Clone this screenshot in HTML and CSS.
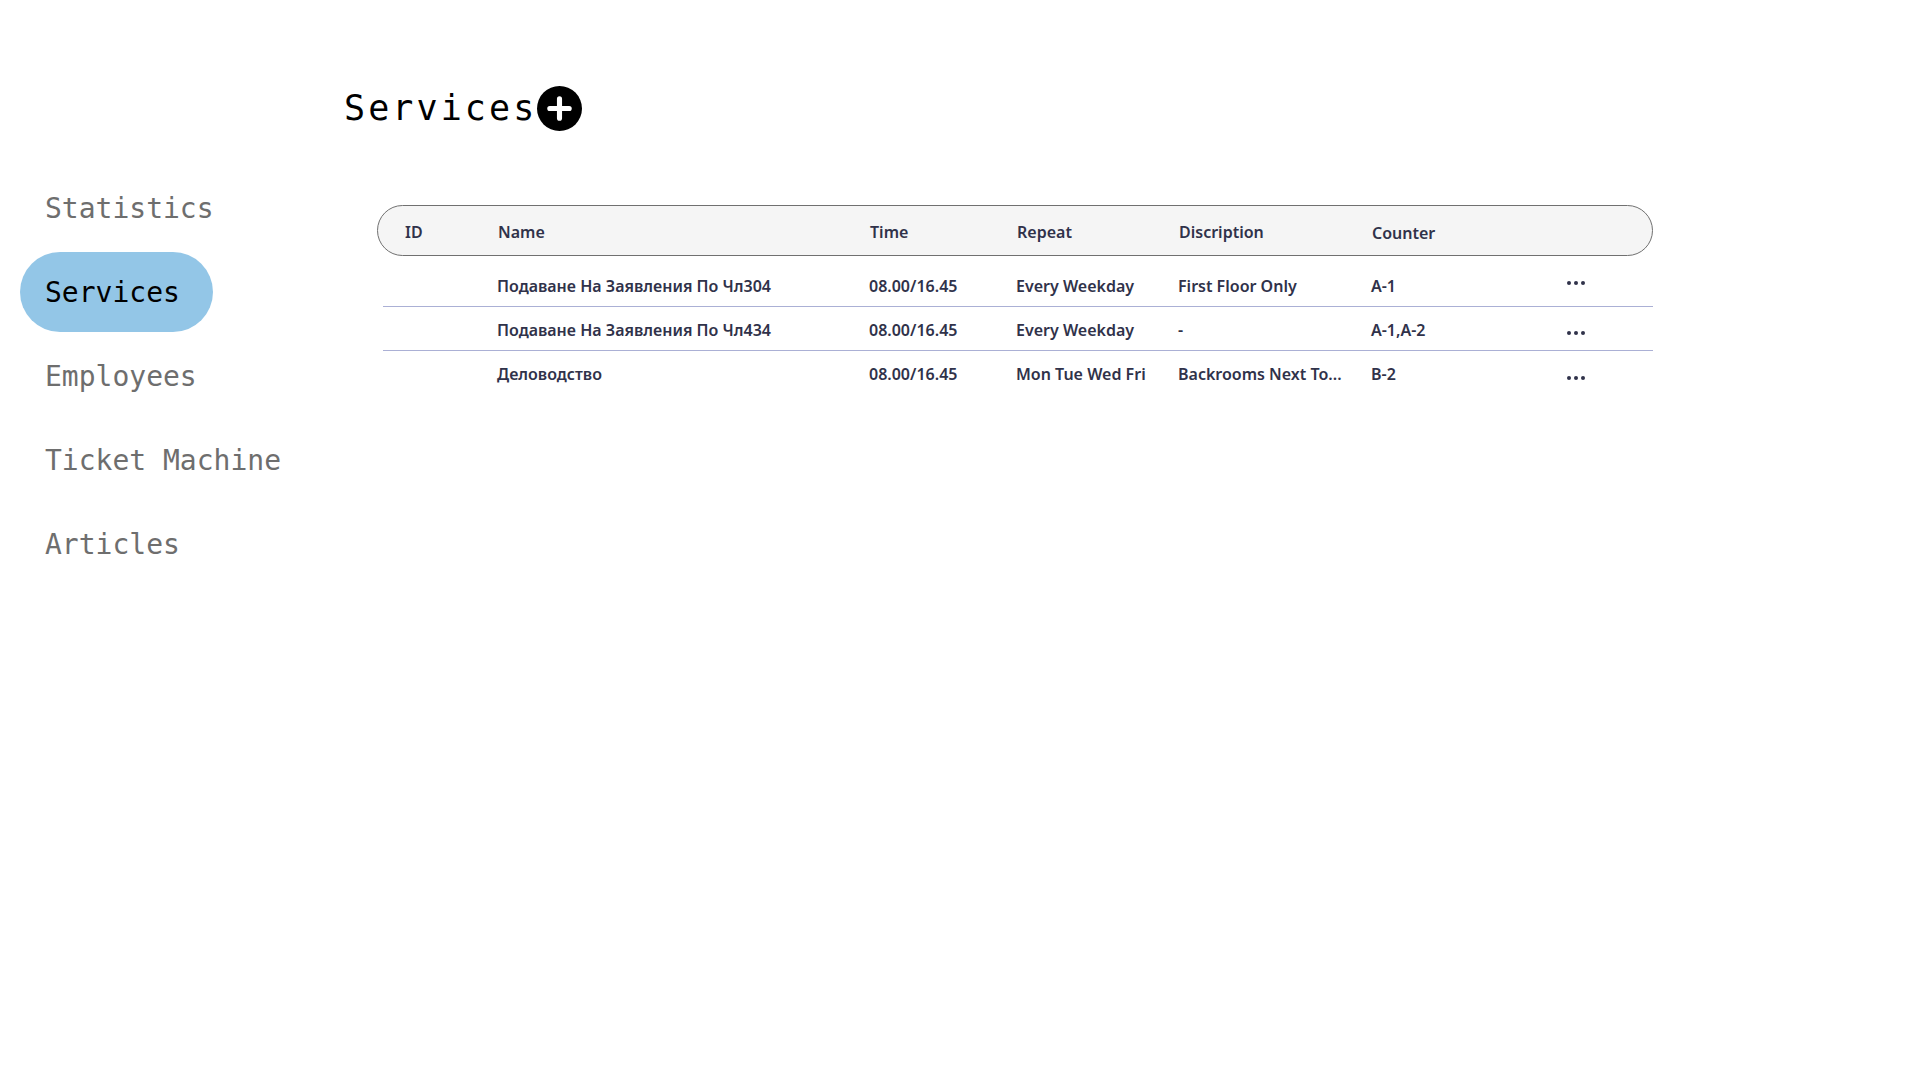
FILE: index.html
```html
<!DOCTYPE html>
<html lang="en">
<head>
<meta charset="utf-8">
<title>Services</title>
<link rel="stylesheet" href="styles.css">
</head>
<body>
<div class="app">
  <nav class="sidebar">
    <a class="nav-item">Statistics</a>
    <a class="nav-item active">Services</a>
    <a class="nav-item">Employees</a>
    <a class="nav-item">Ticket Machine</a>
    <a class="nav-item">Articles</a>
  </nav>
  <main class="main">
    <div class="title-row">
      <h1 class="title">Services</h1>
      <span class="add-btn">
        <svg width="45" height="45" viewBox="0 0 44 44"><circle cx="22" cy="22" r="22" fill="#000"/><path d="M22 12.5v19M12.5 22h19" stroke="#fff" stroke-width="5" stroke-linecap="round"/></svg>
      </span>
    </div>
    <div class="table">
      <div class="thead">
        <span>ID</span><span>Name</span><span>Time</span><span>Repeat</span><span>Discription</span><span class="counter-h">Counter</span><span></span>
      </div>
      <div class="row">
        <span></span><span>Подаване На Заявления По Чл304</span><span>08.00/16.45</span><span>Every Weekday</span><span>First Floor Only</span><span>A-1</span>
        <span class="dots up"><svg width="18" height="4" viewBox="0 0 18 4"><circle cx="2" cy="2" r="2"/><circle cx="9" cy="2" r="2"/><circle cx="16" cy="2" r="2"/></svg></span>
      </div>
      <div class="row">
        <span></span><span>Подаване На Заявления По Чл434</span><span>08.00/16.45</span><span>Every Weekday</span><span>-</span><span>A-1,A-2</span>
        <span class="dots"><svg width="18" height="4" viewBox="0 0 18 4"><circle cx="2" cy="2" r="2"/><circle cx="9" cy="2" r="2"/><circle cx="16" cy="2" r="2"/></svg></span>
      </div>
      <div class="row">
        <span></span><span>Деловодство</span><span>08.00/16.45</span><span>Mon Tue Wed Fri</span><span>Backrooms Next To...</span><span>B-2</span>
        <span class="dots"><svg width="18" height="4" viewBox="0 0 18 4"><circle cx="2" cy="2" r="2"/><circle cx="9" cy="2" r="2"/><circle cx="16" cy="2" r="2"/></svg></span>
      </div>
    </div>
  </main>
</div>
</body>
</html>
```
FILE: styles.css
```css
* { box-sizing: border-box; }
html, body { margin: 0; padding: 0; background: #fff; }
body { width: 1920px; height: 1080px; overflow: hidden; }

.app {
  display: grid;
  grid-template-columns: 344px 1fr;
  height: 100%;
}

.sidebar {
  display: flex;
  flex-direction: column;
  align-items: flex-start;
  gap: 4px;
  padding: 168px 0 0 20px;
}

.nav-item {
  display: flex;
  align-items: center;
  height: 80px;
  padding: 0 33px 0 25px;
  border-radius: 40px;
  font-family: "DejaVu Sans Mono", monospace;
  font-size: 28px;
  color: #6e6e6e;
  text-decoration: none;
  white-space: nowrap;
}

.nav-item.active {
  background: #93c6e7;
  color: #000;
}

.main {
  padding-top: 86px;
}

.title-row {
  display: flex;
  align-items: center;
  height: 45px;
}

.title {
  margin: 0;
  font-family: "DejaVu Sans Mono", monospace;
  font-weight: 400;
  font-size: 35px;
  line-height: 45px;
  letter-spacing: 3.1px;
  color: #000;
}

.add-btn {
  display: flex;
}

.table {
  margin: 74px 0 0 33px;
  width: 1276px;
  font-family: "Noto Sans", sans-serif;
  font-weight: 600;
  font-size: 16px;
  color: #30324a;
}

.thead, .row {
  display: grid;
  grid-template-columns: 93px 372px 147px 162px 193px 196px 1fr;
  align-items: center;
  white-space: nowrap;
  padding-top: 2px;
}

.thead {
  height: 51px;
  padding-left: 27px;
  background: #f5f5f5;
  border: 1px solid #707070;
  border-radius: 26px;
  margin-bottom: 7px;
}

.counter-h { padding-top: 2px; }

.row {
  margin-left: 6px;
  height: 44px;
  padding-left: 21px;
  border-bottom: 1px solid #abb0d5;
}

.row:last-child { border-bottom: none; }

.dots {
  display: flex;
  fill: #30324a;
  margin-top: 7px;
}

.dots.up { margin-top: -5px; }
```
